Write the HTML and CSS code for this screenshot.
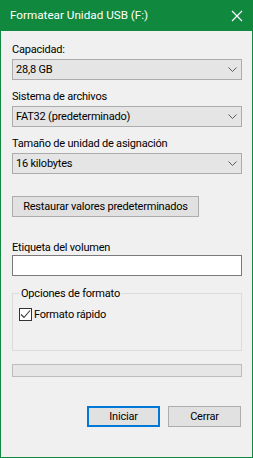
FILE: index.html
```html
<!DOCTYPE html>
<html lang="es">

<head>
    <meta charset="UTF-8">
    <title>Formatear Unidad USB (F:)</title>
    <link rel="stylesheet" href="styles.css">
</head>

<body>
    <div class="window">
        <div class="titlebar">
            <span class="title">Formatear Unidad USB (F:)</span>
            <svg class="close" width="12" height="12" viewBox="0 0 12 12">
                <path d="M1 1 L11 11 M11 1 L1 11" stroke="#fff" stroke-width="1.2" fill="none" />
            </svg>
        </div>

        <div class="content">
            <div class="field">
                <label>Capacidad:</label>
                <div class="combo">
                    <span>28,8 GB</span>
                    <svg class="chevron" width="9" height="5" viewBox="0 0 9 5">
                        <path d="M0.5 0.5 L4.5 4.5 L8.5 0.5" stroke="#5a5a5a" fill="none" />
                    </svg>
                </div>
            </div>

            <div class="field">
                <label>Sistema de archivos</label>
                <div class="combo">
                    <span>FAT32 (predeterminado)</span>
                    <svg class="chevron" width="9" height="5" viewBox="0 0 9 5">
                        <path d="M0.5 0.5 L4.5 4.5 L8.5 0.5" stroke="#5a5a5a" fill="none" />
                    </svg>
                </div>
            </div>

            <div class="field">
                <label>Tamaño de unidad de asignación</label>
                <div class="combo">
                    <span>16 kilobytes</span>
                    <svg class="chevron" width="9" height="5" viewBox="0 0 9 5">
                        <path d="M0.5 0.5 L4.5 4.5 L8.5 0.5" stroke="#5a5a5a" fill="none" />
                    </svg>
                </div>
            </div>

            <button class="btn restore">Restaurar valores predeterminados</button>

            <div class="field volume">
                <label>Etiqueta del volumen</label>
                <input type="text" class="textbox">
            </div>

            <fieldset class="options">
                <legend>Opciones de formato</legend>
                <label class="check">
                    <span class="box">
                        <svg width="11" height="11" viewBox="0 0 11 11">
                            <path d="M1 5.5 L4 8.5 L10 1.5" stroke="#333" stroke-width="1.1" fill="none" />
                        </svg>
                    </span>
                    Formato rápido
                </label>
            </fieldset>

            <div class="progress"></div>

            <div class="actions">
                <button class="btn default">Iniciar</button>
                <button class="btn">Cerrar</button>
            </div>
        </div>
    </div>
</body>

</html>
```

FILE: styles.css
```css
body {
    margin: 0;
    font-family: Roboto, "Liberation Sans", sans-serif;
    font-size: 11px;
    letter-spacing: -0.2px;
    line-height: 15px;
    color: #000;
}

.window {
    width: 253px;
    height: 458px;
    box-sizing: border-box;
    border: 1px solid #10893e;
    border-top: none;
    background-color: #f0f0f0;
}

.titlebar {
    height: 31px;
    margin: 0 -1px;
    background-color: #10893e;
    color: #fff;
    display: flex;
    align-items: center;
    justify-content: space-between;
    padding: 0 10px 0 10px;
    font-size: 11.7px;
    letter-spacing: 0;
}

.content {
    padding: 11px 10px 0 11px;
}

.field label {
    display: block;
    line-height: 15px;
    margin-bottom: 2px;
    white-space: nowrap;
}

.field {
    margin-bottom: 9px;
}

.combo {
    height: 21px;
    box-sizing: border-box;
    border: 1px solid #acacac;
    background-color: #e5e5e5;
    display: flex;
    align-items: center;
    justify-content: space-between;
    padding: 0 4px 0 3px;
    white-space: nowrap;
}

.btn {
    font-family: inherit;
    font-size: 11px;
    letter-spacing: -0.2px;
    color: #000;
    height: 21px;
    box-sizing: border-box;
    border: 1px solid #adadad;
    background-color: #e1e1e1;
    padding: 0;
    line-height: 17px;
    white-space: nowrap;
}

.restore {
    margin-top: 22px;
    width: 187px;
    display: block;
}

.volume {
    margin-top: 23px;
    margin-bottom: 10px;
}

.volume label {
    margin-bottom: 0;
}

.textbox {
    display: block;
    width: 100%;
    height: 21px;
    box-sizing: border-box;
    border: 1px solid #7a7a7a;
    background: #fff;
    margin: 0;
}

.options {
    margin: 0;
    height: 65px;
    box-sizing: border-box;
    border: 1px solid #dcdcdc;
    padding: 6px 6px 0;
}

.options legend {
    padding: 0 2px;
    margin-left: 0;
    line-height: 15px;
}

.check {
    display: flex;
    align-items: center;
    gap: 2px;
}

.box {
    width: 13px;
    height: 13px;
    box-sizing: border-box;
    border: 1px solid #333;
    background: #fff;
    display: flex;
    align-items: center;
    justify-content: center;
}

.progress {
    margin-top: 13px;
    height: 13px;
    box-sizing: border-box;
    border: 1px solid #bcbcbc;
    background-color: #e6e6e6;
}

.actions {
    margin-top: 29px;
    display: flex;
    justify-content: flex-end;
    gap: 8px;
    padding-right: 1px;
}

.actions .btn {
    width: 73px;
}

.btn.default {
    border: 2px solid #0078d7;
}
```
